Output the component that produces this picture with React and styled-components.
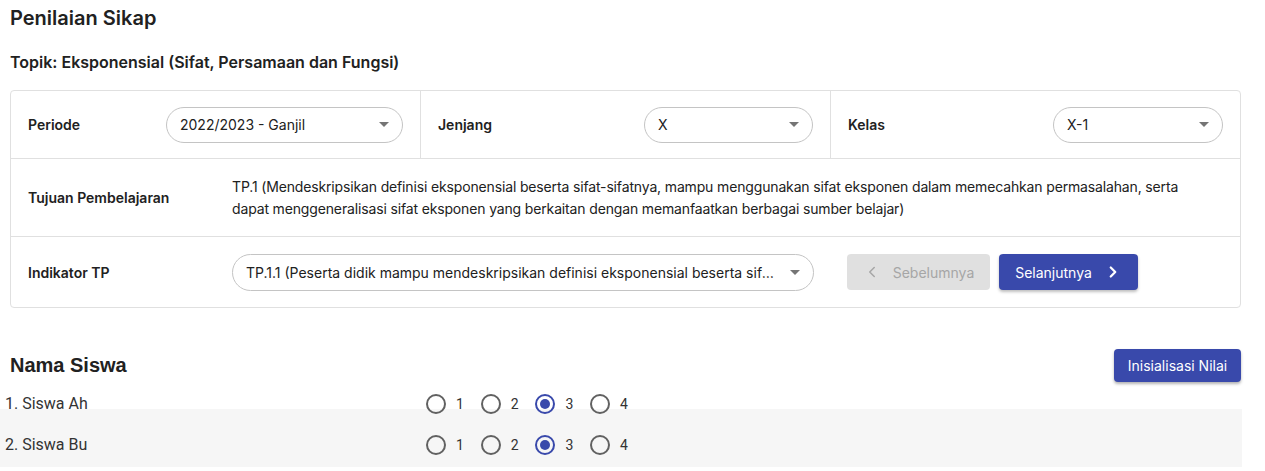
import styled, { createGlobalStyle } from 'styled-components';
import { ChevronLeft, ChevronRight } from 'lucide-react';

const GlobalStyle = createGlobalStyle`
  body {
    margin: 0;
    font-family: Inter, "Noto Sans", sans-serif;
    color: #212121;
    background: #fff;
  }
`;

const Page = styled.div`
  width: 1231px;
  padding: 6px 0 0 10px;
`;

const Title = styled.h1`
  margin: 0;
  font-size: 20px;
  line-height: 24px;
  font-weight: 600;
`;

const Topic = styled.h2`
  margin: 22px 0 0;
  font-size: 16px;
  line-height: 20px;
  font-weight: 600;
`;

const Card = styled.div`
  margin-top: 18px;
  border: 1px solid #e0e0e0;
  border-radius: 4px;
`;

const FilterRow = styled.div`
  display: grid;
  grid-template-columns: 409px 410px 1fr;
  height: 67px;
  border-bottom: 1px solid #e0e0e0;
`;

const FilterCell = styled.div`
  display: flex;
  align-items: center;
  justify-content: space-between;
  padding: 0 17px 0 17px;
  border-left: ${(p) => (p.$first ? 'none' : '1px solid #e0e0e0')};
`;

const Label = styled.div`
  font-size: 14px;
  font-weight: 600;
  width: ${(p) => p.$width || 'auto'};
  flex-shrink: 0;
`;

const Select = styled.div`
  display: flex;
  align-items: center;
  justify-content: space-between;
  width: ${(p) => p.$width};
  height: ${(p) => p.$height || '36px'};
  box-sizing: border-box;
  border: 1px solid #c4c4c4;
  border-radius: 20px;
  padding: 0 13px 0 13px;
  font-size: 14px;
  color: #212121;
`;

const SelectValue = styled.span`
  white-space: nowrap;
  overflow: hidden;
  text-overflow: ellipsis;
  margin-right: 16px;
`;

const Caret = styled.span`
  flex-shrink: 0;
  width: 0;
  height: 0;
  border-left: 5px solid transparent;
  border-right: 5px solid transparent;
  border-top: 5px solid #757575;
`;

const DetailRow = styled.div`
  display: flex;
  align-items: center;
  min-height: ${(p) => p.$height};
  padding: 0 17px;
  border-bottom: ${(p) => (p.$last ? 'none' : '1px solid #e0e0e0')};
`;

const Objective = styled.p`
  margin: 0;
  font-size: 14px;
  line-height: 22px;
  letter-spacing: -0.15px;
  padding-right: 10px;
`;

const ButtonGroup = styled.div`
  display: flex;
  gap: 9px;
  margin-left: 33px;
`;

const NavButton = styled.button`
  display: flex;
  align-items: center;
  justify-content: center;
  gap: 12px;
  height: 36px;
  width: ${(p) => p.$width};
  border: none;
  border-radius: 4px;
  font-family: Inter, sans-serif;
  font-size: 14px;
  background: ${(p) => (p.$disabled ? '#e0e0e0' : '#3949ab')};
  color: ${(p) => (p.$disabled ? '#a6a6a6' : '#fff')};
  box-shadow: ${(p) =>
    p.$disabled ? 'none' : '0 2px 3px rgba(0,0,0,0.25)'};
`;

const StudentHeader = styled.div`
  display: flex;
  align-items: center;
  justify-content: space-between;
  margin-top: 41px;
`;

const SectionTitle = styled.h3`
  margin: 0;
  font-family: "Liberation Sans", Arial, sans-serif;
  font-size: 20px;
  font-weight: 700;
  color: #212121;
`;

const PrimaryButton = styled.button`
  height: 33px;
  width: 127px;
  border: none;
  border-radius: 4px;
  background: #3949ab;
  color: #fff;
  font-family: Inter, sans-serif;
  font-size: 14px;
  box-shadow: 0 2px 3px rgba(0, 0, 0, 0.3);
`;

const StudentList = styled.div`
  margin: 10px 0 0 -10px;
  width: 1242px;
`;

const StudentRow = styled.div`
  display: flex;
  align-items: flex-start;
  height: ${(p) => p.$height};
  padding: ${(p) => p.$padTop} 0 0 5px;
  background: ${(p) => (p.$shaded ? '#f6f6f6' : 'transparent')};
  font-family: Roboto, sans-serif;
`;

const StudentName = styled.div`
  width: 421px;
  font-size: 16px;
  line-height: 24px;
  color: #333;
`;

const RadioGroup = styled.div`
  display: flex;
`;

const RadioOption = styled.label`
  display: flex;
  align-items: center;
  width: 54.7px;
  height: 24px;
  font-size: 14px;
  color: #333;
`;

const RadioCircle = styled.span`
  display: flex;
  align-items: center;
  justify-content: center;
  width: 20px;
  height: 20px;
  box-sizing: border-box;
  border-radius: 50%;
  border: 2px solid ${(p) => (p.$checked ? '#3949ab' : '#616161')};
  margin-right: 10px;

  &::after {
    content: '';
    display: ${(p) => (p.$checked ? 'block' : 'none')};
    width: 10px;
    height: 10px;
    border-radius: 50%;
    background: #3949ab;
  }
`;

const students = [
  { name: '1. Siswa Ah', value: 3 },
  { name: '2. Siswa Bu', value: 3 },
];

const App = () => {
  return (
    <Page>
      <GlobalStyle />
      <Title>Penilaian Sikap</Title>
      <Topic>Topik: Eksponensial (Sifat, Persamaan dan Fungsi)</Topic>

      <Card>
        <FilterRow>
          <FilterCell $first>
            <Label>Periode</Label>
            <Select $width="237px">
              <SelectValue>2022/2023 - Ganjil</SelectValue>
              <Caret />
            </Select>
          </FilterCell>
          <FilterCell>
            <Label>Jenjang</Label>
            <Select $width="169px">
              <SelectValue>X</SelectValue>
              <Caret />
            </Select>
          </FilterCell>
          <FilterCell>
            <Label>Kelas</Label>
            <Select $width="170px">
              <SelectValue>X-1</SelectValue>
              <Caret />
            </Select>
          </FilterCell>
        </FilterRow>

        <DetailRow $height="77px">
          <Label $width="204px">Tujuan Pembelajaran</Label>
          <Objective>
            TP.1 (Mendeskripsikan definisi eksponensial beserta sifat-sifatnya, mampu
            menggunakan sifat eksponen dalam memecahkan permasalahan, serta dapat
            menggeneralisasi sifat eksponen yang berkaitan dengan memanfaatkan berbagai
            sumber belajar)
          </Objective>
        </DetailRow>

        <DetailRow $height="70px" $last>
          <Label $width="204px">Indikator TP</Label>
          <Select $width="582px" $height="37px">
            <SelectValue>
              TP.1.1 (Peserta didik mampu mendeskripsikan definisi eksponensial beserta
              sifat-sifatnya)
            </SelectValue>
            <Caret />
          </Select>
          <ButtonGroup>
            <NavButton $disabled $width="143px">
              <ChevronLeft size={18} strokeWidth={2} />
              Sebelumnya
            </NavButton>
            <NavButton $width="139px">
              Selanjutnya
              <ChevronRight size={18} strokeWidth={3} />
            </NavButton>
          </ButtonGroup>
        </DetailRow>
      </Card>

      <StudentHeader>
        <SectionTitle>Nama Siswa</SectionTitle>
        <PrimaryButton>Inisialisasi Nilai</PrimaryButton>
      </StudentHeader>

      <StudentList>
        {students.map((s, i) => (
          <StudentRow
            key={s.name}
            $shaded={i % 2 === 1}
            $height={i === 0 ? '17px' : '34px'}
            $padTop={i === 0 ? '0' : '24px'}
          >
            <StudentName>{s.name}</StudentName>
            <RadioGroup>
              {[1, 2, 3, 4].map((n) => (
                <RadioOption key={n}>
                  <RadioCircle $checked={s.value === n} />
                  {n}
                </RadioOption>
              ))}
            </RadioGroup>
          </StudentRow>
        ))}
      </StudentList>
    </Page>
  );
};

export default App;
